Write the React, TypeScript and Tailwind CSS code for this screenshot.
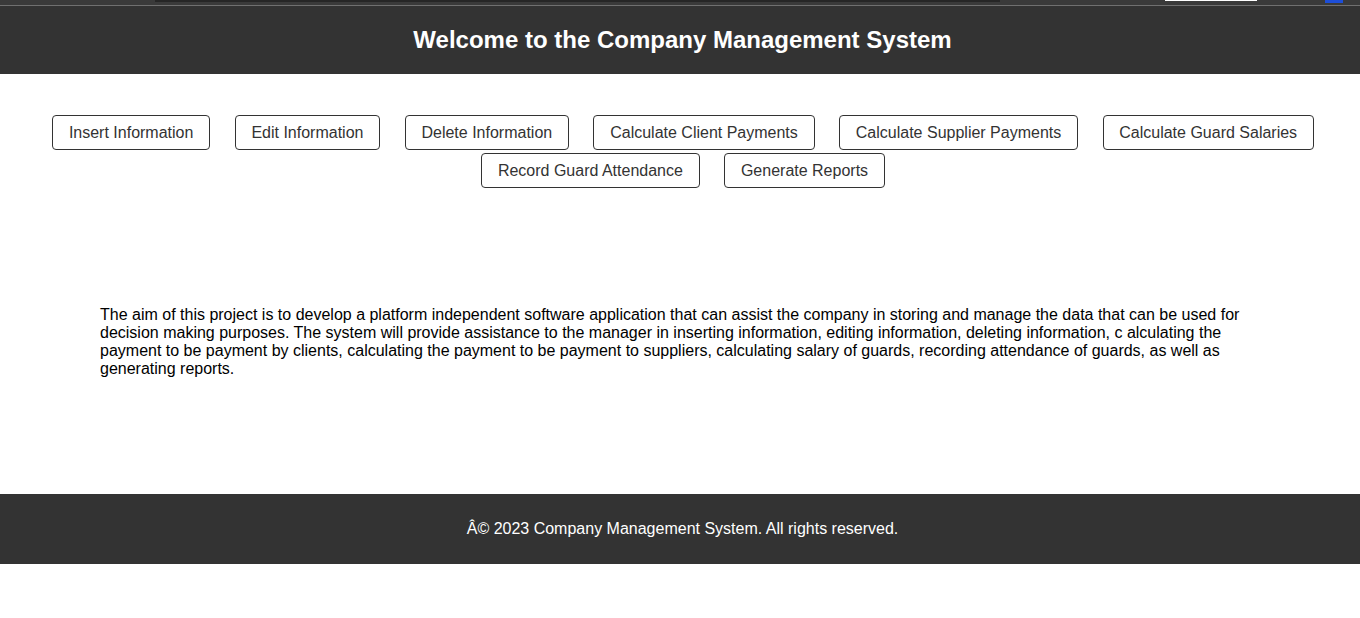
const buttons = [
  'Insert Information',
  'Edit Information',
  'Delete Information',
  'Calculate Client Payments',
  'Calculate Supplier Payments',
  'Calculate Guard Salaries',
  'Record Guard Attendance',
  'Generate Reports',
];

export default function App() {
  return (
    <div className="min-h-[618px] bg-white font-['Liberation_Sans',Arial,sans-serif]">
      {/* browser strip left over at the top of the capture */}
      <div className="flex h-[5px] bg-[#3a3a3a]">
        <div className="ml-[155px] h-[2px] w-[845px] bg-[#262626]" />
        <div className="ml-[165px] h-[1px] w-[92px] bg-white" />
        <div className="ml-[68px] h-[3px] w-[18px] bg-[#1d4ed8]" />
      </div>
      <div className="h-px bg-[#707070]" />

      <header className="bg-[#333] py-5 pl-[5px] text-center text-white">
        <h1 className="text-[24px] leading-[28px] font-bold">Welcome to the Company Management System</h1>
      </header>

      <nav className="flex flex-wrap justify-center gap-x-[24.5px] gap-y-[3px] pt-[41px] pl-[6px]">
        {buttons.map((b) => (
          <button
            key={b}
            type="button"
            className="h-[35px] rounded-[4px] border border-[#333] bg-white px-[15.75px] text-[16px] text-[#333]"
          >
            {b}
          </button>
        ))}
      </nav>

      <main className="h-[306px] px-[100px] pt-[118px]">
        <p className="text-[16px] leading-[18px] text-black">
          The aim of this project is to develop a platform independent software application that can assist the company in storing and manage the data that can be used for decision making purposes. The system will provide assistance to the manager in inserting information, editing information, deleting information, c alculating the payment to be payment by clients, calculating the payment to be payment to suppliers, calculating salary of guards, recording attendance of guards, as well as generating reports.
        </p>
      </main>

      <footer className="flex h-[70px] items-center justify-center bg-[#333] pl-[5px] text-[16px] text-white">
        <p>Â© 2023 Company Management System. All rights reserved.</p>
      </footer>
    </div>
  );
}
